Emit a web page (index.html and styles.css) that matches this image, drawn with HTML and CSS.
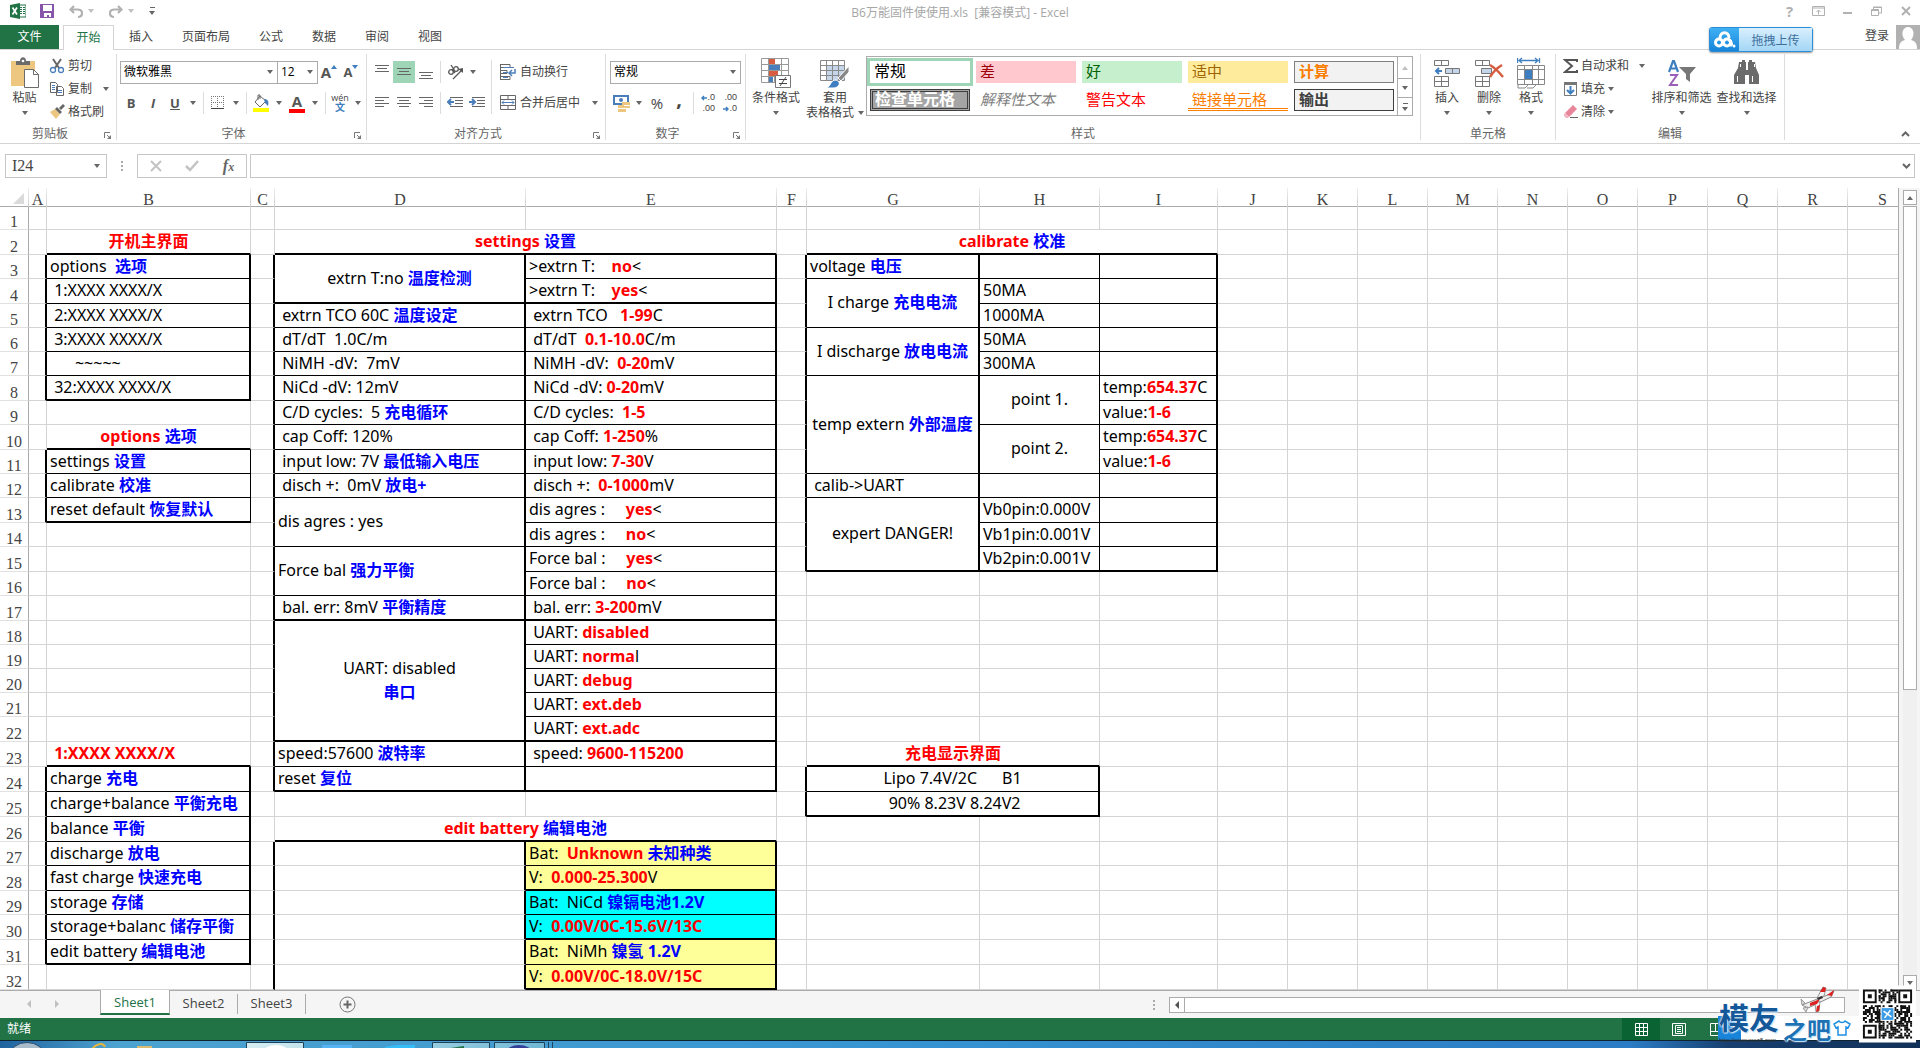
FILE: index.html
```html
<!DOCTYPE html>
<html lang="zh-CN">
<head>
<meta charset="utf-8">
<title>B6万能固件使使用.xls [兼容模式] - Excel</title>
<link rel="stylesheet" href="styles.css">
</head>
<body>
<header class="titlebar">
  <div class="quick">
    <svg width="16" height="16" viewBox="0 0 16 16"><path d="M8 2h8v12H8z" fill="#fff" stroke="#217346"/><path d="M10 4.500h2M13 4.500h2M10 6.500h2M13 6.500h2M10 8.500h2M13 8.500h2M10 10.500h2M13 10.500h2" stroke="#217346"/><path d="M0 2l10-2v16L0 14z" fill="#217346"/><path d="M2.500 4.500l4.500 7M7 4.500l-4.500 7" stroke="#fff" stroke-width="1.700"/></svg>
    <button class="q-save" aria-label="保存"><svg width="14" height="14" viewBox="0 0 14 14"><path d="M0 0h14v14H0z" fill="#8755aa"/><path d="M3 1h9v6H3zM4 9h7v4H9v-2H7v2H4z" fill="#fff"/></svg></button>
    <button class="q-step" aria-label="撤消"><svg width="14" height="13" viewBox="0 0 14 13"><path d="M5 1L1.500 4.500 5 8M2 4.500h6.500c6 0 6 7 .5 7.500" fill="none" stroke="#b1b1b1" stroke-width="2.200"/></svg><i class="arr pale"></i></button>
    <button class="q-step" aria-label="恢复"><svg width="14" height="13" viewBox="0 0 14 13"><path d="M9 1l3.500 3.500L9 8M12 4.500H5.500c-6 0-6 7-.5 7.500" fill="none" stroke="#b1b1b1" stroke-width="2.200"/></svg><i class="arr pale"></i></button>
    <button class="q-more" aria-label="自定义快速访问工具栏"><i class="bar"></i><i class="arr"></i></button>
  </div>
  <h1>B6万能固件使使用.xls&nbsp; [兼容模式] - Excel</h1>
  <div class="window">
    <button aria-label="帮助" class="help">?</button>
    <button aria-label="功能区显示选项"><svg width="13" height="10" viewBox="0 0 13 10"><path d="M.5.500h12v9H.500zM1 2h11M6.500 8.500v-4M4.500 6l2-2 2 2" fill="none" stroke="#b1b1b1"/></svg></button>
    <button aria-label="最小化"><svg width="10" height="10" viewBox="0 0 10 10"><path d="M0 7h9" stroke="#b1b1b1" stroke-width="2"/></svg></button>
    <button aria-label="还原"><svg width="11" height="10" viewBox="0 0 11 10"><path d="M.5 3.500h7v6h-7zM2.500 3V1h8v6H8M.5 4.500h7M3 1.500h7" fill="none" stroke="#b1b1b1"/></svg></button>
    <button aria-label="关闭"><svg width="10" height="10" viewBox="0 0 10 10"><path d="M1 1l8 8M9 1L1 9" stroke="#b1b1b1" stroke-width="2"/></svg></button>
  </div>
</header>

<nav class="tabs">
  <button class="file">文件</button>
  <button class="active">开始</button>
  <div class="others"><button>插入</button><button>页面布局</button><button>公式</button><button>数据</button><button>审阅</button><button>视图</button></div>
  <a class="login" href="#">登录</a>
  <svg width="24" height="24" viewBox="0 0 24 24"><path d="M0 0h24v24H0z" fill="#b1b1b1"/><path d="M3 24c0-6 2-8 6-9C4 9 7 2 12 2s8 7 3 13c4 1 6 3 6 9z" fill="#fff"/></svg>
  <button class="upload"><span class="cloud"><svg width="22" height="18" viewBox="0 0 22 18"><g fill="none" stroke="#fff" stroke-width="3"><circle cx="5" cy="11.500" r="3.500"/><circle cx="13" cy="11.500" r="3.500"/><path d="M6 7c0-7 9-7 9 0M15 9c3 1 2 5 3 6"/></g><circle cx="20" cy="15" r="1.500" fill="#fff"/></svg></span><span class="up-text">拖拽上传</span></button>
</nav>

<section class="ribbon">
  <div class="group g-clip">
    <div class="tools">
      <button class="big paste"><span class="pic"><svg width="30" height="32" viewBox="0 0 30 32"><path d="M1 4h24v25H1z" fill="#edc77f"/><path d="M6 4h4c0-5 6-5 6 0h4v4H6z" fill="#6b6b6b"/><circle cx="13" cy="4" r="1.300" fill="#fff"/><path d="M14.500 12.500h9l5 5v13h-14z" fill="#fff" stroke="#6b6b6b"/><path d="M23.500 12.500v5h5" fill="none" stroke="#6b6b6b"/></svg></span><span>粘贴</span><span class="drop"><i class="arr"></i></span></button>
      <div class="lines">
        <button><svg width="16" height="16" viewBox="0 0 16 16"><path d="M4 1l6 9M12 1l-6 9" stroke="#666" stroke-width="2"/><circle cx="4" cy="12" r="2.500" fill="none" stroke="#4a7ebb" stroke-width="1.300"/><circle cx="12" cy="12" r="2.500" fill="none" stroke="#4a7ebb" stroke-width="1.300"/></svg>剪切</button>
        <button><svg width="16" height="16" viewBox="0 0 16 16"><path d="M1.500 1.500h5l2 2v8h-7zM7.500 5.500h5l2 2v7h-7z" fill="#fff" stroke="#666"/><path d="M3 4.500h3M3 6.500h3M3 8.500h3M9 9.500h4M9 11.500h4" stroke="#4a7ebb"/></svg>复制<i class="arr far"></i></button>
        <button><svg width="16" height="16" viewBox="0 0 16 16"><path d="M1 8l5-3 5 5-4 5z" fill="#edc77f"/><path d="M6 5l2-2 5 5-2 2zM10 4l4-4 2 2-4 4z" fill="#666"/></svg>格式刷</button>
      </div>
    </div>
    <footer class="with-launch">剪贴板<svg class="launch" width="8" height="8" viewBox="0 0 8 8"><path d="M.5 6V.500H6M3 3l3 3" fill="none" stroke="#777"/><path d="M7 3v4H3z" fill="#777"/></svg></footer>
  </div>

  <div class="group g-font">
    <div class="tools rows">
      <div class="row">
        <label class="combo face"><select aria-label="字体"><option>微软雅黑</option></select></label>
        <label class="combo size"><select aria-label="字号"><option>12</option></select></label>
        <button class="ib grow"><b class="a1">A</b><i class="arr up"></i></button>
        <button class="ib grow"><b class="a2">A</b><i class="arr blue"></i></button>
      </div>
      <div class="row">
        <button class="ib"><b>B</b></button><button class="ib"><b><em>I</em></b></button><button class="ib"><b><u>U</u></b></button><span class="dd"><i class="arr"></i></span><i class="sep"></i>
        <button class="ib" aria-label="边框"><svg width="14" height="14" viewBox="0 0 14 14"><path d="M.5 0v13M6.500 0v13M12.500 0v13M0 .500h13M0 6.500h13" stroke="#777" stroke-dasharray="1 1"/><path d="M0 12.500h13" stroke="#444"/></svg></button><span class="dd"><i class="arr"></i></span><i class="sep"></i>
        <button class="ib" aria-label="填充颜色"><svg width="18" height="18" viewBox="0 0 18 18"><path d="M8 2l6 5-6 6-5-5zM6 6V1h2v4" fill="#fff" stroke="#666"/><path d="M12 5c4 0 5 2 4 7l-3-3z" fill="#4a7ebb"/><path d="M1 14h16v4H1z" fill="#ff0"/></svg></button><span class="dd"><i class="arr"></i></span>
        <button class="ib fontcolor" aria-label="字体颜色"><b>A</b></button><span class="dd"><i class="arr"></i></span><i class="sep"></i>
        <button class="ib pinyin"><span>wén</span><b>文</b></button><span class="dd"><i class="arr"></i></span>
      </div>
    </div>
    <footer class="with-launch">字体<svg class="launch" width="8" height="8" viewBox="0 0 8 8"><path d="M.5 6V.500H6M3 3l3 3" fill="none" stroke="#777"/><path d="M7 3v4H3z" fill="#777"/></svg></footer>
  </div>

  <div class="group g-align">
    <div class="tools">
      <div class="rows">
        <div class="row">
          <button class="ib" aria-label="顶端对齐"><svg width="14" height="16" viewBox="0 0 14 16"><path d="M0 1.500h14M2 4.500h10M0 7.500h14" stroke="#666"/></svg></button><button class="ib on" aria-label="垂直居中"><svg width="14" height="16" viewBox="0 0 14 16"><path d="M0 4.500h14M2 7.500h10M0 10.500h14" stroke="#666"/></svg></button><button class="ib" aria-label="底端对齐"><svg width="14" height="16" viewBox="0 0 14 16"><path d="M0 8.500h14M2 11.500h10M0 14.500h14" stroke="#666"/></svg></button><i class="sep"></i>
          <button class="ib" aria-label="方向"><svg width="17" height="16" viewBox="0 0 17 16"><g fill="none" stroke="#555" stroke-width="1.300"><circle cx="4" cy="8" r="2.300"/><path d="M5 5l3 4"/><circle cx="9" cy="5" r="2.300"/><path d="M4 1l3 4.500M6 15L15 6"/></g><path d="M16 4v5l-5-4z" fill="#555"/></svg></button><span class="dd"><i class="arr"></i></span>
        </div>
        <div class="row">
          <button class="ib" aria-label="左对齐"><svg width="14" height="12" viewBox="0 0 14 12"><path d="M0 .500h14M0 3.500h9M0 6.500h14M0 9.500h9" stroke="#666"/></svg></button><button class="ib" aria-label="居中"><svg width="14" height="12" viewBox="0 0 14 12"><path d="M0 .500h14M2 3.500h10M0 6.500h14M2 9.500h10" stroke="#666"/></svg></button><button class="ib" aria-label="右对齐"><svg width="14" height="12" viewBox="0 0 14 12"><path d="M0 .500h14M5 3.500h9M0 6.500h14M5 9.500h9" stroke="#666"/></svg></button><i class="sep"></i>
          <button class="ib" aria-label="减少缩进量"><svg width="16" height="12" viewBox="0 0 16 12"><path d="M3 .500h13M8 3.500h8M8 6.500h8M3 9.500h13" stroke="#666"/><path d="M7 5H1M4 2L1 5l3 3" fill="none" stroke="#4a7ebb" stroke-width="2"/></svg></button><button class="ib" aria-label="增加缩进量"><svg width="16" height="12" viewBox="0 0 16 12"><path d="M3 .500h13M8 3.500h8M8 6.500h8M3 9.500h13" stroke="#666"/><path d="M0 5h6M3 2l3 3-3 3" fill="none" stroke="#4a7ebb" stroke-width="2"/></svg></button>
        </div>
      </div>
      <i class="sep tall"></i>
      <div class="rows">
        <button class="row wide"><svg width="16" height="16" viewBox="0 0 16 16"><path d="M.5 0v16M1 .500h9v3H1M1 6.500h6v3H1M1 12.500h9v3H1" fill="none" stroke="#666"/><path d="M3 3.500h11M3 8.500h5M3 13.500h5" stroke="#4a7ebb"/><path d="M15 5v4h-5M12 6l-3 3 3 3" fill="none" stroke="#4a7ebb" stroke-width="1.500"/></svg>自动换行</button>
        <button class="row wide"><svg width="16" height="16" viewBox="0 0 16 16"><path d="M.5.500h15v14H.500zM0 4.500h16M0 10.500h16M8 0v4M8 11v4" fill="none" stroke="#666"/><path d="M2 7.500h12M4 5.500l-2 2 2 2M12 5.500l2 2-2 2" fill="none" stroke="#4a7ebb"/></svg>合并后居中<i class="arr far"></i></button>
      </div>
    </div>
    <footer class="with-launch">对齐方式<svg class="launch" width="8" height="8" viewBox="0 0 8 8"><path d="M.5 6V.500H6M3 3l3 3" fill="none" stroke="#777"/><path d="M7 3v4H3z" fill="#777"/></svg></footer>
  </div>

  <div class="group g-num">
    <div class="tools rows">
      <div class="row"><label class="combo fmt"><select aria-label="数字格式"><option>常规</option></select></label></div>
      <div class="row">
        <button class="ib" aria-label="会计数字格式"><svg width="17" height="17" viewBox="0 0 17 17"><path d="M1 1h14v8H1z" fill="#fff" stroke="#4a7ebb" stroke-width="2"/><circle cx="8" cy="5" r="2" fill="#4a7ebb"/><path d="M9 7h8v3H9zM9 11h8v2H9zM5 10h6v3H5zM5 14h8v3H5z" fill="#edc77f"/></svg></button><span class="dd"><i class="arr"></i></span>
        <button class="ib pct">%</button><button class="ib comma">,</button><i class="sep"></i>
        <button class="ib dec"><span><svg width="6" height="6" viewBox="0 0 6 6"><path d="M6 3H1M3 1L1 3l2 2" fill="none" stroke="#3f7fbf" stroke-width="1.500"/></svg>.0</span><span>.00</span></button><button class="ib dec"><span>.00</span><span><svg width="6" height="6" viewBox="0 0 6 6"><path d="M0 3h5M3 1l2 2-2 2" fill="none" stroke="#3f7fbf" stroke-width="1.500"/></svg>.0</span></button>
      </div>
    </div>
    <footer class="with-launch">数字<svg class="launch" width="8" height="8" viewBox="0 0 8 8"><path d="M.5 6V.500H6M3 3l3 3" fill="none" stroke="#777"/><path d="M7 3v4H3z" fill="#777"/></svg></footer>
  </div>

  <div class="group g-style">
    <div class="tools">
      <button class="big cond"><span class="pic"><svg width="30" height="30" viewBox="0 0 30 30"><path d="M.5.500h27v24H.500zM0 6.500h28M0 12.500h28M0 18.500h28M7.500 0v25M13.500 0v25M20.500 0v25" fill="none" stroke="#999"/><path d="M8 1h6v5H8zM8 13h9v5H8z" fill="#d65d3f"/><path d="M8 7h11v5H8zM8 19h4v5H8z" fill="#4a7ebb"/><path d="M14.500 17.500h15v12h-15z" fill="#fff" stroke="#777"/><path d="M18 21.500h8M18 25.500h8M25 19l-6 9" stroke="#444"/></svg></span><span>条件格式</span><span class="drop"><i class="arr"></i></span></button>
      <button class="big tbl"><span class="pic"><svg width="30" height="30" viewBox="0 0 30 30"><path d="M7 7h18v15H7z" fill="#c5d5ea"/><path d="M.5 2.500h24v20H.500zM0 7.500h25M0 12.500h25M0 17.500h25M6.500 2v20M12.500 2v20M18.500 2v20" fill="none" stroke="#888"/><path d="M29 8v6l-8 9-3-3z" fill="#888" stroke="#fff"/><path d="M6 30c5-1 4-8 10-8 6 2 3 8-3 8z" fill="#3f7fbf" stroke="#fff"/></svg></span><span>套用</span><span class="drop">表格格式<i class="arr"></i></span></button>
      <div class="gallery">
        <div class="swatches">
          <button class="s-normal">常规</button><button class="s-bad">差</button><button class="s-good">好</button><button class="s-neutral">适中</button><button class="s-calc">计算</button>
          <button class="s-check">检查单元格</button><button class="s-note">解释性文本</button><button class="s-warn">警告文本</button><button class="s-link">链接单元格</button><button class="s-out">输出</button>
        </div>
        <div class="pager"><button aria-label="上一行"><i class="arr up pale"></i></button><button aria-label="下一行"><i class="arr"></i></button><button class="q-more" aria-label="其他"><i class="bar"></i><i class="arr"></i></button></div>
      </div>
    </div>
    <footer>样式</footer>
  </div>

  <div class="group g-cells">
    <div class="tools">
      <button class="big"><span class="pic"><svg width="28" height="30" viewBox="0 0 28 30"><path d="M1.500 2.500h14v5h-14zM8.500 2v6M1.500 18.500h14v10h-14zM8.500 18v11M1 23.500h15" fill="none" stroke="#777"/><path d="M12.500 10.500h14v5h-14zM19.500 10v6" fill="#c5d5ea" stroke="#777"/><path d="M9 13H3M6 10l-3 3 3 3" fill="none" stroke="#3f7fbf" stroke-width="2"/></svg></span><span>插入</span><span class="drop"><i class="arr"></i></span></button>
      <button class="big"><span class="pic"><svg width="30" height="30" viewBox="0 0 30 30"><path d="M1.500 2.500h14v5h-14zM8.500 2v6M1.500 18.500h14v10h-14zM8.500 18v11M1 23.500h15" fill="none" stroke="#777"/><path d="M7.500 10.500h10v5h-10z" fill="#c5d5ea" stroke="#777"/><path d="M16 7c5 3 9 7 13 12M28 7c-5 3-9 7-12 12" fill="none" stroke="#d65d3f" stroke-width="2.500"/></svg></span><span>删除</span><span class="drop"><i class="arr"></i></span></button>
      <button class="big"><span class="pic"><svg width="28" height="32" viewBox="0 0 28 32"><path d="M.5 1v5M22.500 1v5M2 3.500h19M5 1L2 3.500 5 6M18 1l3 2.500L18 6" fill="none" stroke="#3f7fbf" stroke-width="1.300"/><path d="M.5 8.500h27v19H.500zM0 12.500h28M0 22.500h28M7.500 8v19M15.500 8v19M21.500 8v19M1 28v3h7l3-3M10 31h6l3-3" fill="none" stroke="#888"/><path d="M8 13h7v9H8z" fill="#3f7fbf"/></svg></span><span>格式</span><span class="drop"><i class="arr"></i></span></button>
    </div>
    <footer>单元格</footer>
  </div>

  <div class="group g-edit">
    <div class="tools">
      <div class="lines">
        <button><svg width="16" height="16" viewBox="0 0 16 16"><path d="M14 4V2H2l7 6-7 6h12v-2" fill="none" stroke="#555" stroke-width="2"/></svg>自动求和<i class="arr far"></i></button>
        <button><svg width="16" height="16" viewBox="0 0 16 16"><path d="M1.500 1.500h12v13h-12z" fill="#fff" stroke="#777"/><path d="M1 1h13v3H1z" fill="#777"/><path d="M7.500 5v7M4 9l3.500 3.500L11 9" fill="none" stroke="#3f7fbf" stroke-width="2"/></svg>填充<i class="arr near"></i></button>
        <button><svg width="16" height="16" viewBox="0 0 16 16"><path d="M2 9l8-8 4 4-8 8z" fill="#e8859b"/><path d="M1 10l1-1 4 4-1 1H3l-2-2z" fill="#f2b3c0"/><path d="M7 13.500h8" stroke="#666"/></svg>清除<i class="arr near"></i></button>
      </div>
      <button class="big sort"><span class="pic"><svg width="30" height="30" viewBox="0 0 30 30"><path d="M2 14L6 3h1l4 11M3.500 10.500h6" fill="none" stroke="#3f7fbf" stroke-width="2.200"/><path d="M3 17h7l-7 10h8" fill="none" stroke="#9a5fb8" stroke-width="2"/><path d="M12 9h17l-6 7v8l-4-3v-5z" fill="#777"/></svg></span><span>排序和筛选</span><span class="drop"><i class="arr"></i></span></button>
      <button class="big sort"><span class="pic"><svg width="28" height="28" viewBox="0 0 28 28"><path d="M6 3h3V1h3v2h1v8h2V3h1V1h3v2h3l1 6 3 7v9H16v-9h-4v9H1v-9l4-7z" fill="#6b6b6b"/><path d="M4.500 17v6M7.500 5v3M19.500 17v6M21.500 5v3" stroke="#fff"/></svg></span><span>查找和选择</span><span class="drop"><i class="arr"></i></span></button>
    </div>
    <footer>编辑</footer>
  </div>
  <button class="collapse" aria-label="折叠功能区"><svg width="9" height="6" viewBox="0 0 9 6"><path d="M1 5l3.500-3.500L8 5" fill="none" stroke="#666" stroke-width="2"/></svg></button>
</section>

<section class="formula">
  <label class="namebox"><input aria-label="名称框" value="I24"><i class="arr"></i></label>
  <i class="grip"></i>
  <div class="fx">
    <button aria-label="取消"><svg width="12" height="12" viewBox="0 0 12 12"><path d="M1 1l10 10M11 1L1 11" stroke="#c3c3c3" stroke-width="2"/></svg></button>
    <button aria-label="输入"><svg width="14" height="12" viewBox="0 0 14 12"><path d="M1 6l4 4 8-9" fill="none" stroke="#c3c3c3" stroke-width="2.500"/></svg></button>
    <button class="fn" aria-label="插入函数"><em>f<small>x</small></em></button>
  </div>
  <label class="entry"><input aria-label="编辑栏"><svg width="9" height="6" viewBox="0 0 9 6"><path d="M1 1l3.500 3.500L8 1" fill="none" stroke="#666" stroke-width="2"/></svg></label>
</section>

<main class="sheet">
  <div class="view">
  <table>
    <colgroup><col class="c-n"><col class="c-a"><col class="c-b"><col class="c-c"><col class="c-d"><col class="c-d"><col class="c-f"><col class="c-g"><col class="c-h"><col class="c-i"><col class="c-j" span="10"></colgroup>
    <thead><tr><th class="corner"><svg width="12" height="12" viewBox="0 0 12 12"><path d="M11 0v11H0z" fill="#dadada"/></svg></th><th>A</th><th>B</th><th>C</th><th>D</th><th>E</th><th>F</th><th>G</th><th>H</th><th>I</th><th>J</th><th>K</th><th>L</th><th>M</th><th>N</th><th>O</th><th>P</th><th>Q</th><th>R</th><th>S</th></tr></thead>
    <tbody>
    <tr class="h23"><th>1</th><td></td><td></td><td></td><td></td><td></td><td></td><td></td><td></td><td></td><td class="rest" colspan="10"></td></tr>
    <tr class="h25"><th>2</th><td></td><td class="b2 mid"><b class="red">开机主界面</b></td><td></td><td class="b2 mid" colspan="2"><b class="red">settings</b> <b class="blu">设置</b></td><td></td><td class="b2 mid" colspan="3"><b class="red">calibrate</b> <b class="blu">校准</b></td><td class="rest" colspan="10"></td></tr>
    <tr class="h24"><th>3</th><td class="r2"></td><td class="r2 b1">options  <b class="blu">选项</b></td><td class="r2"></td><td class="r2 b2 mid" rowspan="2">extrn T:no <b class="blu">温度检测</b></td><td class="r2 b1">&gt;extrn T:    <b class="red">no</b>&lt;</td><td class="r2"></td><td class="r2 b1">voltage <b class="blu">电压</b></td><td class="r1 b1"></td><td class="r2 b1"></td><td class="rest" colspan="10"></td></tr>
    <tr class="h25"><th>4</th><td class="r2"></td><td class="r2 b1"> 1:XXXX XXXX/X</td><td class="r2"></td><td class="r2 b2">&gt;extrn T:    <b class="red">yes</b>&lt;</td><td class="r2"></td><td class="r2 b1 mid" rowspan="2">I charge <b class="blu">充电电流</b></td><td class="r1 b1">50MA</td><td class="r2 b1"></td><td class="rest" colspan="10"></td></tr>
    <tr class="h24"><th>5</th><td class="r2"></td><td class="r2 b1"> 2:XXXX XXXX/X</td><td class="r2"></td><td class="r2 b1"> extrn TCO 60C <b class="blu">温度设定</b></td><td class="r2 b1"> extrn TCO   <b class="red">1-99</b>C</td><td class="r2"></td><td class="r1 b1">1000MA</td><td class="r2 b1"></td><td class="rest" colspan="10"></td></tr>
    <tr class="h24"><th>6</th><td class="r2"></td><td class="r2 b1"> 3:XXXX XXXX/X</td><td class="r2"></td><td class="r2 b1"> dT/dT  1.0C/m</td><td class="r2 b1"> dT/dT  <b class="red">0.1-10.0</b>C/m</td><td class="r2"></td><td class="r2 b1 mid" rowspan="2">I discharge <b class="blu">放电电流</b></td><td class="r1 b1">50MA</td><td class="r2 b1"></td><td class="rest" colspan="10"></td></tr>
    <tr class="h24"><th>7</th><td class="r2"></td><td class="r2 b1">      ~~~~~</td><td class="r2"></td><td class="r2 b1"> NiMH -dV:  7mV</td><td class="r2 b1"> NiMH -dV:  <b class="red">0-20</b>mV</td><td class="r2"></td><td class="r1 b1">300MA</td><td class="r2 b1"></td><td class="rest" colspan="10"></td></tr>
    <tr class="h25"><th>8</th><td class="r2"></td><td class="r2 b2"> 32:XXXX XXXX/X</td><td class="r2"></td><td class="r2 b1"> NiCd -dV: 12mV</td><td class="r2 b1"> NiCd -dV: <b class="red">0-20</b>mV</td><td class="r2"></td><td class="r2 b1 mid" rowspan="4">temp extern <b class="blu">外部温度</b></td><td class="r1 b1 mid" rowspan="2">point 1.</td><td class="r2 b1">temp:<b class="red">654.37</b>C</td><td class="rest" colspan="10"></td></tr>
    <tr class="h24"><th>9</th><td></td><td></td><td class="r2"></td><td class="r2 b1"> C/D cycles:  5 <b class="blu">充电循环</b></td><td class="r2 b1"> C/D cycles:  <b class="red">1-5</b></td><td class="r2"></td><td class="r2 b1">value:<b class="red">1-6</b></td><td class="rest" colspan="10"></td></tr>
    <tr class="h25"><th>10</th><td></td><td class="b2 mid"><b class="red">options</b> <b class="blu">选项</b></td><td class="r2"></td><td class="r2 b1"> cap Coff: 120%</td><td class="r2 b1"> cap Coff: <b class="red">1-250</b>%</td><td class="r2"></td><td class="r1 b1 mid" rowspan="2">point 2.</td><td class="r2 b1">temp:<b class="red">654.37</b>C</td><td class="rest" colspan="10"></td></tr>
    <tr class="h24"><th>11</th><td class="r2"></td><td class="r1 b1">settings <b class="blu">设置</b></td><td class="r2"></td><td class="r2 b1"> input low: 7V <b class="blu">最低输入电压</b></td><td class="r2 b1"> input low: <b class="red">7-30</b>V</td><td class="r2"></td><td class="r2 b1">value:<b class="red">1-6</b></td><td class="rest" colspan="10"></td></tr>
    <tr class="h24"><th>12</th><td class="r2"></td><td class="r1 b1">calibrate <b class="blu">校准</b></td><td class="r2"></td><td class="r2 b1"> disch +:  0mV <b class="blu">放电+</b></td><td class="r2 b1"> disch +:  <b class="red">0-1000</b>mV</td><td class="r2"></td><td class="r2 b1"> calib-&gt;UART</td><td class="r1 b1"></td><td class="r2 b1"></td><td class="rest" colspan="10"></td></tr>
    <tr class="h25"><th>13</th><td class="r2"></td><td class="r1 b2">reset default <b class="blu">恢复默认</b></td><td class="r2"></td><td class="r2 b1" rowspan="2">dis agres : yes</td><td class="r2 b1">dis agres :     <b class="red">yes</b>&lt;</td><td class="r2"></td><td class="r2 b2 mid" rowspan="3">expert DANGER!</td><td class="r1 b1">Vb0pin:0.000V</td><td class="r2 b1"></td><td class="rest" colspan="10"></td></tr>
    <tr class="h24"><th>14</th><td></td><td></td><td class="r2"></td><td class="r2 b1">dis agres :     <b class="red">no</b>&lt;</td><td class="r2"></td><td class="r1 b1">Vb1pin:0.001V</td><td class="r2 b1"></td><td class="rest" colspan="10"></td></tr>
    <tr class="h25"><th>15</th><td></td><td></td><td class="r2"></td><td class="r2 b1" rowspan="2">Force bal <b class="blu">强力平衡</b></td><td class="r2 b1">Force bal :     <b class="red">yes</b>&lt;</td><td class="r2"></td><td class="r1 b2">Vb2pin:0.001V</td><td class="r2 b2"></td><td class="rest" colspan="10"></td></tr>
    <tr class="h24"><th>16</th><td></td><td></td><td class="r2"></td><td class="r2 b1">Force bal :     <b class="red">no</b>&lt;</td><td></td><td></td><td></td><td></td><td class="rest" colspan="10"></td></tr>
    <tr class="h25"><th>17</th><td></td><td></td><td class="r2"></td><td class="r2 b2"> bal. err: 8mV <b class="blu">平衡精度</b></td><td class="r2 b2"> bal. err: <b class="red">3-200</b>mV</td><td></td><td></td><td></td><td></td><td class="rest" colspan="10"></td></tr>
    <tr class="h24"><th>18</th><td></td><td></td><td class="r2"></td><td class="r2 b2 mid uart" rowspan="5">UART: disabled<br><b class="blu">串口</b></td><td class="r2 b1"> UART: <b class="red">disabled</b></td><td></td><td></td><td></td><td></td><td class="rest" colspan="10"></td></tr>
    <tr class="h24"><th>19</th><td></td><td></td><td class="r2"></td><td class="r2 b1"> UART: <b class="red">norma</b>l</td><td></td><td></td><td></td><td></td><td class="rest" colspan="10"></td></tr>
    <tr class="h24"><th>20</th><td></td><td></td><td class="r2"></td><td class="r2 b1"> UART: <b class="red">debug</b></td><td></td><td></td><td></td><td></td><td class="rest" colspan="10"></td></tr>
    <tr class="h24"><th>21</th><td></td><td></td><td class="r2"></td><td class="r2 b1"> UART: <b class="red">ext.deb</b></td><td></td><td></td><td></td><td></td><td class="rest" colspan="10"></td></tr>
    <tr class="h25"><th>22</th><td></td><td></td><td class="r2"></td><td class="r2 b2"> UART: <b class="red">ext.adc</b></td><td></td><td></td><td></td><td></td><td class="rest" colspan="10"></td></tr>
    <tr class="h25"><th>23</th><td></td><td class="b2"> <b class="red">1:XXXX XXXX/X</b></td><td class="r2"></td><td class="r2 b1">speed:57600 <b class="blu">波特率</b></td><td class="r2 b1"> speed: <b class="red">9600-115200</b></td><td></td><td class="b2 mid" colspan="2"><b class="red">充电显示界面</b></td><td></td><td class="rest" colspan="10"></td></tr>
    <tr class="h25"><th>24</th><td class="r2"></td><td class="r2 b1">charge <b class="blu">充电</b></td><td class="r2"></td><td class="r2 b2">reset <b class="blu">复位</b></td><td class="r2 b2"></td><td class="r2"></td><td class="r2 b1 mid" colspan="2">Lipo 7.4V/2C      B1</td><td></td><td class="rest" colspan="10"></td></tr>
    <tr class="h25"><th>25</th><td class="r2"></td><td class="r2 b1">charge+balance <b class="blu">平衡充电</b></td><td></td><td></td><td></td><td class="r2"></td><td class="r2 b2 mid" colspan="2"> 90% 8.23V 8.24V2</td><td></td><td class="rest" colspan="10"></td></tr>
    <tr class="h25"><th>26</th><td class="r2"></td><td class="r2 b1">balance <b class="blu">平衡</b></td><td></td><td class="b2 mid" colspan="2"><b class="red">edit battery</b> <b class="blu">编辑电池</b></td><td></td><td></td><td></td><td></td><td class="rest" colspan="10"></td></tr>
    <tr class="h24"><th>27</th><td class="r2"></td><td class="r2 b1">discharge <b class="blu">放电</b></td><td class="r2"></td><td class="r2"></td><td class="r2 b1 yel">Bat:  <b class="red">Unknown</b> <b class="blu">未知种类</b></td><td></td><td></td><td></td><td></td><td class="rest" colspan="10"></td></tr>
    <tr class="h25"><th>28</th><td class="r2"></td><td class="r2 b1">fast charge <b class="blu">快速充电</b></td><td class="r2"></td><td class="r2"></td><td class="r2 b2 yel">V:  <b class="red">0.000-25.300</b>V</td><td></td><td></td><td></td><td></td><td class="rest" colspan="10"></td></tr>
    <tr class="h24"><th>29</th><td class="r2"></td><td class="r2 b1">storage <b class="blu">存储</b></td><td class="r2"></td><td class="r2"></td><td class="r2 b1 cyan">Bat:  NiCd <b class="blu">镍镉电池1.2V</b></td><td></td><td></td><td></td><td></td><td class="rest" colspan="10"></td></tr>
    <tr class="h25"><th>30</th><td class="r2"></td><td class="r2 b1">storage+balanc <b class="blu">储存平衡</b></td><td class="r2"></td><td class="r2"></td><td class="r2 b2 cyan">V:  <b class="red">0.00V/0C-15.6V/13C</b></td><td></td><td></td><td></td><td></td><td class="rest" colspan="10"></td></tr>
    <tr class="h25"><th>31</th><td class="r2"></td><td class="r2 b2">edit battery <b class="blu">编辑电池</b></td><td class="r2"></td><td class="r2"></td><td class="r2 b1 yel">Bat:  NiMh <b class="blu">镍氢 1.2V</b></td><td></td><td></td><td></td><td></td><td class="rest" colspan="10"></td></tr>
    <tr class="h25"><th>32</th><td></td><td></td><td class="r2"></td><td class="r2"></td><td class="r2 b2 yel">V:  <b class="red">0.00V/0C-18.0V/15C</b></td><td></td><td></td><td></td><td></td><td class="rest" colspan="10"></td></tr>
    </tbody>
  </table>
  </div>
  <div class="vscroll"><button aria-label="向上滚动"><i class="arr up"></i></button><div class="lane"><div class="thumb"></div></div><button aria-label="向下滚动"><i class="arr"></i></button></div>
</main>

<div class="sheetbar">
  <div class="navs"><button aria-label="上一张"><i class="tri left"></i></button><button aria-label="下一张"><i class="tri right"></i></button></div>
  <button class="stab current">Sheet1</button><button class="stab">Sheet2</button><button class="stab">Sheet3</button>
  <button class="add" aria-label="新工作表"><svg width="17" height="17" viewBox="0 0 17 17"><circle cx="8.500" cy="8.500" r="7.500" fill="none" stroke="#777"/><path d="M8.500 4.500v8M4.500 8.500h8" stroke="#666" stroke-width="2"/></svg></button>
  <div class="hscroll"><i class="grip"></i><button aria-label="向左滚动"><i class="tri left dark"></i></button><div class="hthumb"></div></div>
</div>

<footer class="status">
  <span>就绪</span>
  <div class="views">
    <button class="on" aria-label="普通"><svg width="13" height="13" viewBox="0 0 13 13"><path d="M.5.500h12v12H.500zM4.500 0v13M8.500 0v13M0 4.500h13M0 8.500h13" fill="none" stroke="#fff"/></svg></button>
    <button aria-label="页面布局"><svg width="14" height="13" viewBox="0 0 14 13"><path d="M.5.500h13v12H.500zM3.500 2.500h7v8h-7zM5 4.500h4M5 6.500h4M5 8.500h4" fill="none" stroke="#fff"/></svg></button>
    <button aria-label="分页预览"><svg width="14" height="13" viewBox="0 0 14 13"><path d="M.5.500h13v12H.500zM5.500 0v8M0 8.500h14" fill="none" stroke="#fff"/></svg></button>
  </div>
</footer>

<div class="taskbar">
  <svg width="560" height="8" viewBox="0 0 560 8">
    <defs><linearGradient id="btn" x1="0" x2="1"><stop offset="0" stop-color="#d6eef2"/><stop offset="1" stop-color="#6db6d4"/></linearGradient></defs>
    <ellipse cx="27" cy="14" rx="17" ry="12.500" fill="#a9bccb" stroke="#27496a"/>
    <path d="M92 8c4-5 11-7 13-2" fill="none" stroke="#e9b53a" stroke-width="2"/><path d="M137 5h15v3h-15z" fill="#d9bb74"/>
    <path d="M246.500 8V1.500h57V8M432.500 8V1.500h57V8M494.500 8V1.500h50V8M548.500 8V1M552.500 8V1" fill="url(#btn)" stroke="#20435c"/>
    <ellipse cx="276" cy="10" rx="12" ry="6" fill="#fff"/><path d="M322 4h30v4h-30z" fill="#56b4f5"/><path d="M385 6l12-2h18v4h-30z" fill="#35bdf7"/><path d="M444 8l20-3v3z" fill="#217346"/><ellipse cx="519" cy="12" rx="13" ry="8" fill="#343f9a"/>
  </svg>
</div>

<aside class="mark">
  <div class="ime"><svg width="18" height="16" viewBox="0 0 18 16"><path d="M6 1L1 4l2 4 2-1v8h8V7l2 1 2-4-5-3c-1 2-5 2-6 0z" fill="#fff" stroke="#1e8fe0" stroke-width="1.500"/></svg></div>
  <span class="brand">模友</span><span class="brand small">之吧</span><span class="url">http://www.moz8.com</span>
  <svg class="plane" width="36" height="27" viewBox="0 0 36 27"><path d="M2 19L30 8l4-3-3 6L8 22z" fill="#eee" stroke="#888"/><path d="M17 12l6-11 3 1-2 8zM20 15l-1 10-3 1-1-8z" fill="#f4f4f4" stroke="#999"/><path d="M20 6l3-5 3 1-1 4zM17 20l3-1-1 6-3 1zM27 9l7-5-2 6zM10 17l10-4-3 5-7 2z" fill="#d22"/><path d="M2 19l-1-6 4 4zM3 22l3 4 2-5z" fill="#ddd" stroke="#999"/><path d="M17 12l5-2 1 2-5 2z" fill="#333"/></svg>
  <svg class="qr" width="57" height="58" viewBox="-4 -4 58 58"><path d="M-4-4h58v58H-4z" fill="#fff"/>
    <g fill="none" stroke="#111" stroke-width="2">
      <path d="M16 1H36M0 25H50M16 41H50" stroke-dasharray="4 2 2 4 8 2 2 2 6 4"/>
      <path d="M16 3H36M0 19H50M0 31H50M16 43H50" stroke-dasharray="2 4 6 2 2 2 4 6 2 2"/>
      <path d="M18 5H34M2 21H50M16 37H50M18 47H50" stroke-dasharray="6 2 2 2 2 4 4 2"/>
      <path d="M16 7H34M0 23H50M2 33H50M16 45H50" stroke-dasharray="2 2 4 2 8 4 2 2 2 2"/>
      <path d="M18 9H34M0 17H50M0 29H50M16 39H50" stroke-dasharray="4 4 2 2 6 2 2 4"/>
      <path d="M16 11H34M4 27H50M16 35H50M16 49H50" stroke-dasharray="2 2 2 4 4 2 10 2"/>
      <path d="M18 13H34M17 0V50M21 2V50M29 0V50M33 4V50M39 16V50M45 18V50M3 16V34M9 18V34" stroke-dasharray="2 4 4 6 2 2 2 8"/>
      <path d="M1 1h12v12H1zM37 1h12v12H37zM1 37h12v12H1z"/>
    </g>
    <path d="M5 5h4v4H5zM41 5h4v4h-4zM5 41h4v4H5z" fill="#111"/><path d="M18 18h14v14H18z" fill="#fff"/><path d="M19 19h12v12H19z" fill="#3b9be6"/><path d="M21 22l8 6M28 21l-6 8" stroke="#fff" stroke-width="1.500"/>
  </svg>
</aside>
</body>
</html>
```
FILE: styles.css
```css
* { box-sizing: border-box; }
body {
  margin: 0;
  min-height: 100vh;
  display: flex;
  flex-direction: column;
  position: relative;
  overflow: hidden;
  background: #fff;
  color: #444;
  font: 12px/16px "Open Sans", "Noto Sans CJK SC", sans-serif;
}
button {
  display: flex;
  align-items: center;
  justify-content: center;
  padding: 0;
  border: 0;
  background: none;
  color: inherit;
  font: inherit;
  white-space: nowrap;
}
svg { display: block; flex: none; }
input, select { font: inherit; border: 0; outline: 0; background: none; padding: 0; margin: 0; }

/* small shared marks */
.arr { flex: none; width: 0; height: 0; border: 3px solid transparent; border-top: 4px solid #666; border-bottom: 0; }
.arr.up { border-top: 0; border-bottom: 4px solid #666; }
.arr.pale { border-top-color: #c0c0c0; }
.arr.up.pale { border-bottom-color: #c0c0c0; }
.arr.blue { border-top-color: #3f7fbf; }
.bar { width: 5px; height: 1px; background: #666; margin-bottom: 3px; }
.q-more { flex-direction: column; }
.sep { flex: none; width: 1px; height: 22px; margin: 0 3px; background: #dcdcdc; }
.grip { width: 2px; height: 10px; background: repeating-linear-gradient(#aaa 0 2px, transparent 2px 4px); }

/* title bar */
.titlebar { display: grid; grid-template-columns: 1fr auto 1fr; height: 25px; align-items: center; }
.titlebar h1 { margin: 0; font-size: 12px; line-height: 22px; font-weight: 400; color: #a6a6a6; }
.quick { display: flex; align-items: center; padding: 0 0 3px 10px; }
.q-save { margin: 0 15px 0 14px; }
.q-step { gap: 5px; width: 40px; justify-content: flex-start; }
.window { display: flex; justify-content: flex-end; padding-bottom: 3px; }
.window button { width: 29px; height: 20px; }
.window .help { color: #b1b1b1; font-size: 15px; font-weight: 700; }

/* ribbon tabs */
.tabs { display: flex; height: 25px; position: relative; border-bottom: 1px solid #d4d4d4; }
.tabs .file { width: 59px; margin-right: 4px; background: #217346; color: #fff; }
.tabs .active { width: 51px; height: 25px; border: 1px solid #d4d4d4; border-bottom: 0; background: #fff; color: #217346; }
.others { display: flex; flex: 1; gap: 29px; padding-left: 15px; }
.login { color: #444; text-decoration: none; line-height: 22px; margin-right: 7px; }
.upload { position: absolute; right: 107px; top: 2px; width: 104px; height: 25px; border: 1px solid #2a8fd6; border-radius: 3px; background: #c4e4fa; box-shadow: 0 1px 2px #999; z-index: 1; }
.cloud { display: flex; align-items: center; justify-content: center; width: 29px; height: 23px; background: linear-gradient(#3fb0f3, #1784da); }
.up-text { flex: 1; line-height: 25px; height: 23px; color: #3d6f9b; background: linear-gradient(#d9effd, #a3d6f6); }

/* ribbon */
.ribbon { display: flex; height: 94px; padding: 4px 0 3px; border-bottom: 1px solid #d4d4d4; }
.group { display: flex; flex: none; flex-direction: column; border-right: 1px solid #dcdcdc; }
.group footer { position: relative; line-height: 12px; text-align: center; color: #666; }
.group .with-launch { padding-right: 16px; }
.launch { position: absolute; right: 4px; top: 4px; }
.tools { display: flex; flex: 1; }
.rows { display: flex; flex-direction: column; gap: 9px; padding-top: 7px; }
.row { display: flex; height: 22px; align-items: center; }
.ib { width: 22px; height: 22px; flex: none; }
.ib.on { background: #9fd5b7; }
.ib b { font-size: 13px; color: #555; }
.dd { display: flex; justify-content: center; width: 14px; flex: none; }
.g-clip { width: 117px; }
.g-font { width: 250px; }
.g-font .tools { padding-left: 3px; }
.g-align { width: 239px; }
.g-align .tools { padding-left: 4px; }
.g-num { width: 140px; }
.g-num .tools { padding-left: 4px; }
.g-style { width: 675px; }
.g-cells { width: 135px; }
.g-cells .tools { padding-left: 5px; }
.g-edit { width: 229px; }
.g-edit .tools { padding-left: 7px; }
.lines { display: flex; flex-direction: column; }
.lines button { height: 23px; gap: 3px; justify-content: flex-start; }
.g-edit .lines { width: 86px; }
.g-edit .lines button { gap: 2px; }
.arr.far { margin-left: 8px; }
.arr.near { margin-left: 1px; }
.big { flex-direction: column; justify-content: flex-start; width: 42px; line-height: 14px; }
.paste { width: 49px; }
.cond { width: 60px; }
.tbl { width: 58px; }
.sort { width: 65px; }
.pic { display: flex; align-items: center; height: 37px; }
.drop { display: flex; align-items: center; gap: 4px; height: 16px; }
.combo { display: flex; align-items: center; position: relative; height: 23px; border: 1px solid #ababab; }
.combo::after { content: ""; position: absolute; right: 4px; border: 3px solid transparent; border-top: 4px solid #666; border-bottom: 0; }
.combo select { appearance: none; flex: 1; min-width: 0; padding-left: 3px; color: #000; }
.face { width: 158px; }
.size { width: 41px; margin-left: -1px; }
.fmt { width: 131px; }
.grow { align-items: flex-start; }
.grow b { line-height: 22px; }
.grow .a1 { font-size: 15px; }
.grow .arr { margin-top: 4px; }
.grow .arr.up { border-bottom-color: #3f7fbf; }
.fontcolor b { width: 16px; font-size: 15px; line-height: 15px; border-bottom: 4px solid red; }
.pinyin { flex-direction: column; font-size: 9px; line-height: 9px; }
.pinyin b { font-size: 10px; line-height: 11px; color: #3f7fbf; }
.pct { font-size: 15px; }
.comma { font-size: 20px; font-weight: 700; padding-bottom: 8px; }
.dec { flex-direction: column; align-items: flex-end; padding-right: 4px; font: 9px/11px "Liberation Sans", sans-serif; }
.dec span { display: flex; align-items: center; }
.sep.tall { height: 54px; margin-top: 6px; }
.wide { gap: 4px; padding-left: 5px; justify-content: flex-start; }

/* style gallery */
.gallery { display: flex; width: 547px; height: 60px; margin: 2px 0 0 2px; border: 1px solid #ababab; }
.swatches { flex: 1; display: grid; grid-template-columns: repeat(5, 100px); grid-auto-rows: 22px; gap: 6px; padding: 4px 0 0 3px; }
.swatches button { justify-content: flex-start; padding: 0 0 3px 4px; font-size: 15px; line-height: 18px; }
.swatches .s-normal { color: #000; font-size: 16px; outline: 3px solid #9fd5b7; }
.swatches .s-bad { background: #ffc7ce; color: #9c0006; }
.swatches .s-good { background: #c6efce; color: #006100; }
.swatches .s-neutral { background: #ffeb9c; color: #9c6500; }
.swatches .s-calc { background: #f2f2f2; color: #fa7d00; border: 1px solid #7f7f7f; font-weight: 700; }
.swatches .s-check { background: #a5a5a5; color: #fff; border: 3px double #3f3f3f; padding-left: 2px; font-size: 16px; line-height: 16px; font-weight: 700; }
.swatches .s-note { color: #7f7f7f; font-style: italic; }
.swatches .s-warn { color: #f00; }
.swatches .s-link { color: #fa7d00; border-bottom: 3px double #ff8001; padding-bottom: 0; }
.swatches .s-out { background: #f2f2f2; color: #3f3f3f; border: 1px solid #3f3f3f; font-weight: 700; }
.pager { display: grid; grid-template-rows: 21px 19px 18px; width: 15px; border-left: 1px solid #ababab; }
.pager button + button { border-top: 1px solid #ababab; }
.collapse { margin: auto 10px 0 auto; height: 12px; }

/* formula bar */
.formula { display: flex; align-items: flex-start; height: 44px; padding: 10px 5px 0; }
.namebox, .fx, .entry { display: flex; align-items: center; height: 24px; border: 1px solid #c6c6c6; }
.namebox { width: 102px; padding: 0 6px; }
.namebox input { flex: 1; min-width: 0; color: #444; font: 16px/20px "Liberation Serif", serif; }
.formula .grip { margin: 7px 14px 0; }
.fx { width: 110px; margin-right: 3px; justify-content: space-around; }
.fn em { font: italic 700 16px/18px "Liberation Serif", serif; color: #666; }
.fn small { font-size: 12px; }
.entry { flex: 1; padding-right: 3px; }
.entry input { flex: 1; }

/* worksheet */
.sheet { display: flex; flex: 1; }
.view { flex: 1; min-width: 0; overflow: hidden; }
table { table-layout: fixed; width: 1918px; border-spacing: 0; color: #000; font: 16px/20px "Noto Sans", "Noto Sans CJK SC", sans-serif; }
.c-n { width: 29px; } .c-a { width: 18px; } .c-b { width: 204px; } .c-c { width: 24px; } .c-d { width: 251px; }
.c-f { width: 30px; } .c-g { width: 173px; } .c-h { width: 120px; } .c-i { width: 118px; } .c-j { width: 70px; }
th { padding: 0; font: 16px/16px "Liberation Serif", serif; color: #444; }
thead th { height: 19px; padding-top: 3px; line-height: 15px; border-right: 1px solid; border-image: linear-gradient(#f0f0f0, #ccc) 1; border-image-width: 0 1px 0 0; background: linear-gradient(#ababab, #ababab) bottom / 100% 1px no-repeat; }
.corner svg { margin: 0 3px 0 auto; }
tbody th { vertical-align: bottom; line-height: 15px; border-right: 1px solid #ababab; border-bottom: 1px solid #e1e1e1; }
td { padding: 0 0 2px 3px; white-space: pre; vertical-align: middle; border-right: 1px solid #d4d4d4; border-bottom: 1px solid #d4d4d4; }
.h23 { height: 23px; } .h24 { height: 24px; } .h25 { height: 25px; }
.mid { text-align: center; padding-left: 0; }
.r1 { border-right: 1px solid #000; }
.r2 { border-right: 2px solid #000; }
.b1 { border-bottom: 1px solid #000; }
.b2 { border-bottom: 2px solid #000; }
.red { color: #f00; }
.blu { color: #00f; }
.yel { background: #ff9; }
.cyan { background: #0ff; }
.uart { line-height: 24px; }
.rest { border-right: 0; background: repeating-linear-gradient(to right, transparent 0 69px, #d4d4d4 69px 70px); }
.vscroll { display: flex; flex-direction: column; width: 22px; padding: 2px 3px 0 4px; border-left: 1px solid #ababab; background: #f5f5f5; }
.vscroll button { height: 15px; border: 1px solid #ababab; background: #fff; }
.lane { flex: 1; margin-top: 1px; background: #f0f0f0; }
.thumb { height: 63%; border: 1px solid #ababab; background: #fff; }

/* sheet tabs */
.sheetbar { display: flex; height: 28px; border-top: 1px solid #ababab; background: #f5f5f5; }
.navs { display: flex; width: 100px; padding: 0 28px 2px 15px; }
.navs button { width: 28px; }
.tri { border: 4px solid transparent; }
.tri.left { border-right-color: #c0c0c0; border-left: 0; }
.tri.right { border-left-color: #c0c0c0; border-right: 0; }
.tri.dark { border-right-color: #555; }
.stab { width: 68px; height: 20px; margin-top: 3px; padding-bottom: 3px; font-size: 13px; border-right: 1px solid #ababab; }
.stab.current { width: 70px; height: 25px; margin-top: -1px; padding-bottom: 0; background: #fff; color: #217346; border: 1px solid #ababab; border-top: 0; border-bottom: 2px solid #217346; }
.add { margin: 5px 0 auto 33px; }
.hscroll { display: flex; align-items: center; width: 692px; height: 16px; margin: 6px 75px 0 auto; }
.hscroll .grip { margin-right: 14px; }
.hscroll button { width: 16px; height: 16px; border: 1px solid #ababab; background: #fff; }
.hthumb { flex: 1; height: 16px; margin-left: -1px; border: 1px solid #ababab; background: #fff; }

/* status bar and desktop strip */
.status { display: flex; justify-content: space-between; height: 22px; padding-left: 7px; background: #217346; color: #fff; line-height: 21px; }
.views { display: flex; padding-right: 184px; }
.views button { width: 38px; }
.views .on { background: #0a6332; }
.taskbar { height: 8px; border-top: 1px solid #10242f; background: linear-gradient(to right, #1f639f, #4da3cf 6%, #3795d2 45%, #2b7cc4 85%, #173f70 90%, #123158); }

/* corner watermark */
.mark { position: absolute; right: 0; bottom: 0; width: 204px; height: 64px; }
.mark > * { position: absolute; }
.ime { left: 2px; right: 0; top: 32px; height: 24px; padding: 4px 0 0 115px; background: linear-gradient(to right, #1784da 23px, #fff 23px); }
.brand { left: 3px; top: 19px; color: #14589a; font-size: 30px; line-height: 30px; font-weight: 700; text-shadow: 0 0 2px #fff, 0 0 2px #fff, 1px 1px 1px #9fd3f5; }
.brand.small { left: 67px; top: 34px; font-size: 24px; line-height: 24px; color: #1c72b4; }
.url { left: 3px; top: 53px; font: 6px/7px "Liberation Sans", sans-serif; color: #333; }
.plane { left: 84px; top: 2px; }
.qr { right: 4px; top: 1px; }
```
